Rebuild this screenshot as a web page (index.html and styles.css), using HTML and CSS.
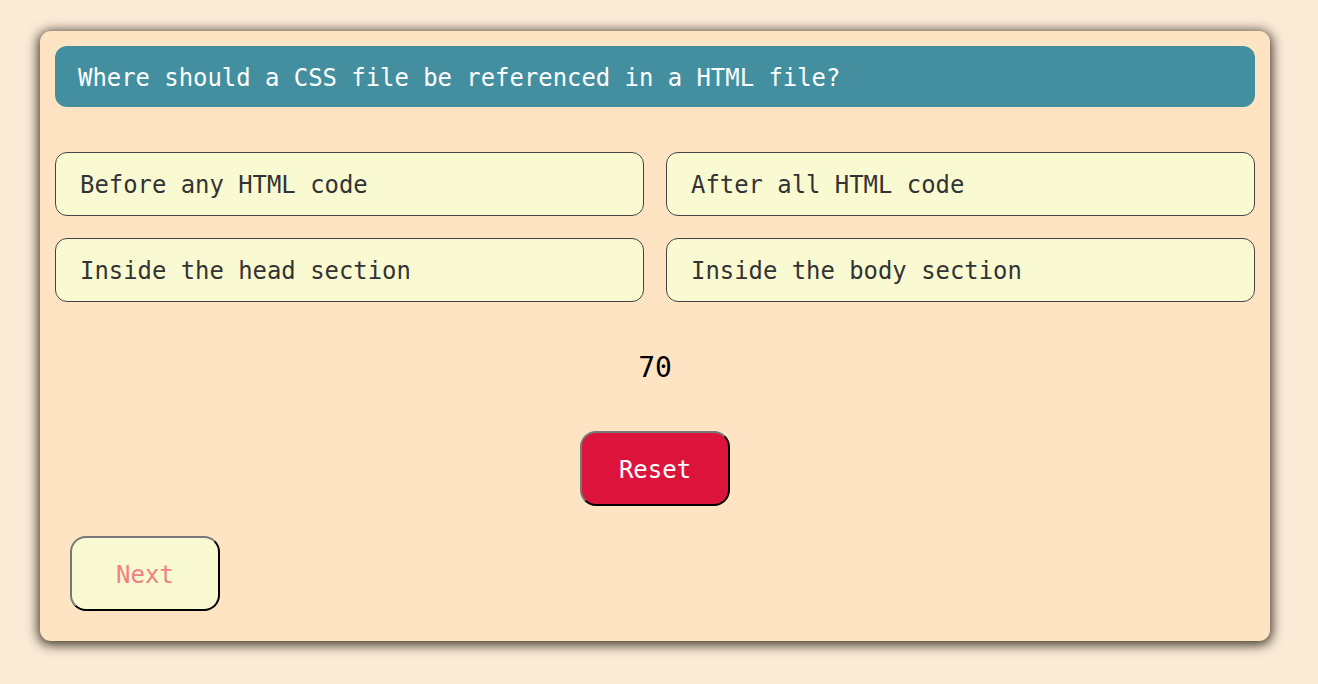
FILE: index.html
```html
<!DOCTYPE html>
<html>
<head>
<meta charset="utf-8">
<link rel="stylesheet" href="styles.css">
</head>
<body>
<div class="card">
  <div class="question">Where should a CSS file be referenced in a HTML file?</div>
  <div class="options">
    <div class="option">Before any HTML code</div>
    <div class="option">After all HTML code</div>
    <div class="option">Inside the head section</div>
    <div class="option">Inside the body section</div>
  </div>
  <div class="score">70</div>
  <div class="reset-row"><button class="btn reset">Reset</button></div>
  <button class="btn next">Next</button>
</div>
</body>
</html>
```
FILE: styles.css
```css
html, body {
  margin: 0;
  padding: 0;
  background: #faebd7;
  font-family: "DejaVu Sans Mono", "Liberation Mono", monospace;
}
body {
  padding: 31px 0 0 40px;
  height: 684px;
  box-sizing: border-box;
}
.card {
  width: 1230px;
  box-sizing: border-box;
  padding: 15px;
  background: #ffe4c4;
  border-radius: 11px;
  box-shadow: 0 2px 12px 2px rgba(30, 20, 10, 0.85);
}
.question {
  height: 61px;
  box-sizing: border-box;
  padding: 2px 23px 0;
  display: flex;
  align-items: center;
  background: #438f9f;
  color: #fff;
  font-size: 23.9px;
  border-radius: 12px;
}
.options {
  margin-top: 45px;
  display: grid;
  grid-template-columns: 1fr 1fr;
  gap: 22px;
}
.option {
  height: 64px;
  box-sizing: border-box;
  padding: 2px 24px 0;
  display: flex;
  align-items: center;
  background: #fafad2;
  border: 1px solid #444;
  border-radius: 12px;
  color: #333;
  font-size: 23.9px;
}
.score {
  margin-top: 49px;
  text-align: center;
  font-size: 28px;
  line-height: 34px;
  color: #000;
}
.reset-row {
  margin-top: 46px;
  display: flex;
  justify-content: center;
}
.btn {
  width: 150px;
  height: 75px;
  border: 2px outset #777;
  border-color: #777 #222 #222 #777;
  border-radius: 16px;
  font-family: "DejaVu Sans Mono", "Liberation Mono", monospace;
  font-size: 24px;
  padding: 2px 0 0;
}
.reset {
  background: #dc143c;
  color: #fff;
}
.next {
  display: block;
  margin: 30px 0 15px 15px;
  background: #fafad2;
  color: #f08080;
}
```
